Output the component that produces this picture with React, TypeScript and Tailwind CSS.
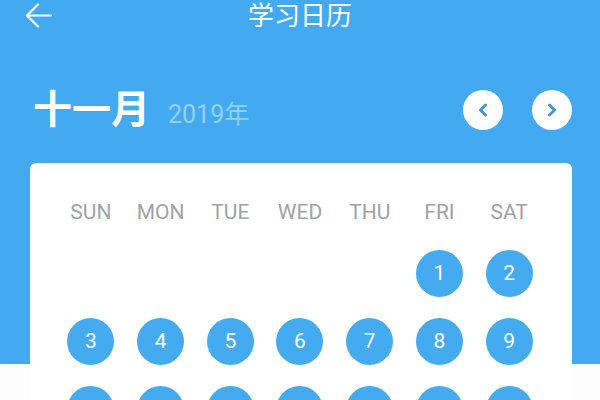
import React from 'react';

const WEEK = ['SUN', 'MON', 'TUE', 'WED', 'THU', 'FRI', 'SAT'];

export default function App() {
  // November 2019 starts on a Friday
  const cells: (number | null)[] = [null, null, null, null, null];
  for (let d = 1; d <= 30; d++) cells.push(d);

  return (
    <div className="w-[600px] h-[400px] overflow-hidden bg-[linear-gradient(#43aaf1_364px,#fdfdfd_364px)] font-['Roboto','Noto_Sans_CJK_SC',sans-serif]">
      <div className="h-[32px] flex items-center justify-between px-[25px]">
        <svg width="28" height="26" viewBox="0 0 28 26" fill="none" stroke="#ffffff" strokeWidth="2.2" strokeLinecap="round" strokeLinejoin="round">
          <path d="M2 12.5 H26" />
          <path d="M13 1.5 L2 12.5 L13 23.5" />
        </svg>
        <div className="text-white text-[26px] leading-none">学习日历</div>
        <div className="w-[28px]" />
      </div>

      <div className="mt-[56px] h-[44px] flex items-center justify-between pl-[33px] pr-[28px]">
        <div className="flex items-baseline gap-[18px]">
          <span className="text-white text-[39px] font-bold leading-none">十一月</span>
          <span className="text-[#95d0f8] text-[25px] leading-none">2019年</span>
        </div>
        <div className="flex items-center gap-[29px]">
          <button className="w-[40px] h-[40px] rounded-full bg-white flex items-center justify-center">
            <svg width="10" height="14" viewBox="0 0 10 14" fill="none" stroke="#4d93cc" strokeWidth="3" strokeLinecap="round" strokeLinejoin="round">
              <path d="M7.5 2 L2.5 7 L7.5 12" />
            </svg>
          </button>
          <button className="w-[40px] h-[40px] rounded-full bg-white flex items-center justify-center">
            <svg width="10" height="14" viewBox="0 0 10 14" fill="none" stroke="#4d93cc" strokeWidth="3" strokeLinecap="round" strokeLinejoin="round">
              <path d="M2.5 2 L7.5 7 L2.5 12" />
            </svg>
          </button>
        </div>
      </div>

      <div className="mt-[31px] ml-[30px] mr-[28px] bg-white rounded-[6px] pt-[34px] pl-[26px] pr-[28px] pb-[20px]">
        <div className="grid grid-cols-7 h-[30px] items-center">
          {WEEK.map(w => (
            <div key={w} className="text-center text-[#9ea3a8] text-[21px] leading-none">{w}</div>
          ))}
        </div>
        <div className="mt-[23px] grid grid-cols-7 gap-y-[21px]">
          {cells.map((d, i) => (
            <div key={i} className="flex justify-center">
              {d ? (
                <div className="w-[47px] h-[47px] rounded-full bg-[#45abf0] text-white text-[21px] flex items-center justify-center">
                  {d}
                </div>
              ) : (
                <div className="w-[47px] h-[47px]" />
              )}
            </div>
          ))}
        </div>
      </div>
    </div>
  );
}
